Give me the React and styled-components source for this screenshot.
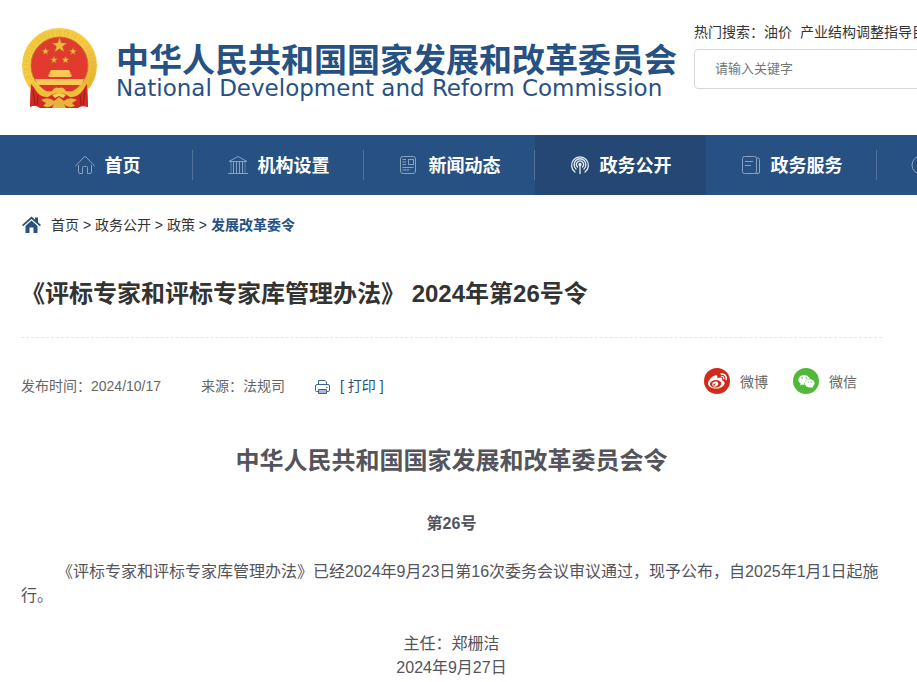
import React from 'react';
import styled, { createGlobalStyle } from 'styled-components';
import { FaWeibo, FaWeixin } from 'react-icons/fa';

const GlobalStyle = createGlobalStyle`
  * {
    box-sizing: border-box;
  }

  body {
    margin: 0;
    background: #fff;
    color: #333;
    font-family: "Liberation Sans", "Noto Sans CJK SC", sans-serif;
    font-size: 14px;
  }

  a {
    color: inherit;
    text-decoration: none;
  }
`;

const Page = styled.div`
  overflow: hidden;
`;

const HeaderWrapper = styled.header`
  display: flex;
  height: 135px;
  padding-left: 21px;
`;

const Logo = styled.a`
  display: flex;
  flex: none;
  gap: 19px;
  width: 673px;
  padding-top: 27px;

  svg {
    display: block;
  }
`;

const LogoText = styled.div`
  padding-top: 17px;
  color: #275183;
  white-space: nowrap;

  strong {
    display: block;
    font-size: 33px;
    line-height: 34px;
  }

  span {
    display: block;
    font-family: "DejaVu Sans", sans-serif;
    font-size: 23px;
    line-height: 20px;
  }
`;

const Search = styled.form`
  flex: 1 0 300px;
  padding-top: 22px;

  p {
    display: flex;
    gap: 8px;
    margin: 0 0 7px;
    line-height: 20px;
    white-space: nowrap;
  }

  input {
    display: block;
    width: 100%;
    height: 40px;
    padding: 0 20px 2px;
    border: 1px solid #d5d8da;
    border-radius: 4px;
    font-family: inherit;
    font-size: 13px;

    &::placeholder {
      color: #757575;
    }
  }
`;

const NavBar = styled.nav`
  display: flex;
  padding-left: 22px;
  background: #275183;
`;

const NavItem = styled.a`
  display: flex;
  flex: 0 0 171px;
  align-items: center;
  justify-content: ${({ $start }) => ($start ? 'flex-start' : 'center')};
  gap: 10px;
  height: 60px;
  padding-bottom: 2px;
  padding-left: ${({ $start }) => ($start ? '34px' : '0')};
  background: ${({ $active }) => ($active ? '#244873' : 'none')};
  color: #fff;
  font-size: 18px;
  font-weight: bold;

  svg {
    margin-top: 2px;
    color: ${({ $active }) => ($active ? '#e9edf1' : '#8ba2bf')};
  }
`;

const Divider = styled.span`
  flex: none;
  align-self: center;
  width: 1px;
  height: 30px;
  margin-left: -1px;
  background: #527499;
`;

const Main = styled.main`
  padding: 0 35px 3px 21px;
`;

const Breadcrumb = styled.div`
  display: flex;
  align-items: center;
  gap: 10px;
  height: 58px;

  svg {
    margin-top: 2px;
  }

  strong {
    color: #275183;
  }
`;

const Title = styled.h1`
  margin: 0;
  padding: 23px 0 25px;
  border-bottom: 1px dashed #e6e6e6;
  font-size: 24px;
  line-height: 36px;
`;

const MetaRow = styled.div`
  display: flex;
  align-items: flex-end;
  justify-content: space-between;
  padding-top: 28px;
  color: #666;
`;

const Info = styled.div`
  display: flex;
  gap: 40px;
  line-height: 20px;
`;

const Source = styled.div`
  display: flex;
  gap: 30px;
`;

const PrintButton = styled.button`
  display: flex;
  align-items: center;
  gap: 10px;
  padding: 0;
  border: none;
  background: none;
  color: #275183;
  font: inherit;
  cursor: pointer;
`;

const Share = styled.div`
  display: flex;
  height: 30px;
`;

const ShareLink = styled.a`
  display: flex;
  align-items: center;
  gap: 10px;
  padding-right: 25px;
`;

const ShareIcon = styled.span`
  display: flex;
  align-items: center;
  justify-content: center;
  width: 26px;
  height: 26px;
  border-radius: 50%;
  background: ${({ $color }) => $color};
  color: #fff;
`;

const Article = styled.article`
  padding-top: 53px;
  color: #54545c;
  font-size: 16px;
  line-height: 24px;

  h2 {
    margin: 0 0 39px;
    font-size: 24px;
    line-height: 24px;
    text-align: center;
  }

  h3 {
    margin: 0 0 24px;
    font-size: 16px;
    text-align: center;
  }

  p {
    margin: 0 0 24px;
    text-indent: 36px;
  }
`;

const Signature = styled.div`
  text-align: center;
`;

const star = (cx, cy, r) =>
  Array.from({ length: 10 }, (_, i) => {
    const a = (Math.PI / 5) * i - Math.PI / 2;
    const d = i % 2 ? r * 0.4 : r;
    return `${cx + d * Math.cos(a)},${cy + d * Math.sin(a)}`;
  }).join(' ');

const Emblem = () => (
  <svg width="76" height="82" viewBox="0 0 76 82" aria-hidden="true">
    <defs>
      <linearGradient id="gold" x1="0" y1="0" x2="1" y2="1">
        <stop offset="0" stopColor="#f0c93f" />
        <stop offset="0.5" stopColor="#f6cc45" />
        <stop offset="1" stopColor="#e3a92c" />
      </linearGradient>
    </defs>
    <path d="M10 57 L9 80 Q14 77 19 81 H57 Q62 77 67 80 L66 57 Z" fill="#cb2a22" />
    <circle cx="38.5" cy="38.5" r="37.5" fill="url(#gold)" />
    <circle cx="38.5" cy="38.5" r="33" fill="none" stroke="#dca631" strokeWidth="5" strokeDasharray="1 2 2 3" opacity="0.25" />
    <circle cx="38.5" cy="38.5" r="28.5" fill="#e23a2e" stroke="#bd7c25" />
    <g fill="#efbd3d" stroke="#a8701c" strokeWidth="0.4">
      <polygon points={star(38.5, 18.5, 8)} />
      <polygon points={star(24.5, 24.5, 4)} />
      <polygon points={star(52, 24.5, 4)} />
      <polygon points={star(33, 33, 4)} />
      <polygon points={star(44.5, 33, 4)} />
    </g>
    <g fill="#f8c957">
      <path d="M30 43 H48 L50 46.5 H28 Z" />
      <path d="M29 46 H49 V48 H29 Z" />
      <path d="M27 47.5 H51 L50 50 H28 Z" />
      <path d="M14 52 H63 L61 57 L58 59 H19 L16 57 Z" />
    </g>
    <path d="M18 58 H59 L51 64 H25 Z" fill="#de3428" />
    <path d="M10 57 Q22 72 31 63 Q34 60 38 62 Q42 60 45 63 Q54 72 66 57 L67 80 Q60 78 55 81 L50 76 L45 81 H31 L26 76 L20 81 Q14 77 9 80 Z" fill="#d12a23" />
    <path d="M11 55 Q21 67 31 64 Q34 59 38 61 Q42 59 45 64 Q55 67 66 55 Q60 71 49 70 L44 67 Q38 65 32 67 L27 70 Q16 71 11 55 Z" fill="#f0bf3d" />
    <path d="M20 73 Q28 69 33 74 L38 70 L43 74 Q48 69 56 73 L51 76 L54 79 Q47 82 43 77 L45 81 H31 L33 77 Q29 82 22 79 L25 76 Z" fill="#e8b33a" />
    <path d="M31 68 Q38 64 45 68 L42 71 L38 69 L34 71 Z" fill="#f2d056" />
    <path d="M12 63 L14 78 M17 68 L16 78 M64 63 L62 78 M59 68 L60 78" stroke="#991c1b" fill="none" />
  </svg>
);

const HomeIcon = () => (
  <svg width="20" height="20" viewBox="0 0 20 20" fill="none" stroke="currentColor" strokeLinejoin="round" aria-hidden="true">
    <path d="M.5 11 L9 2 Q10 1 11 2 L19.5 11" strokeLinecap="round" />
    <path d="M3.5 10 V17 Q3.5 18.5 5 18.5 H7.5 V12.5 Q7.5 11.5 8.5 11.5 H11.5 Q12.5 11.5 12.5 12.5 V18.5 H15 Q16.5 18.5 16.5 17 V10" />
  </svg>
);

const InstitutionIcon = () => (
  <svg width="20" height="20" viewBox="0 0 20 20" fill="none" stroke="currentColor" aria-hidden="true">
    <path d="M1 6.5 L10 1.5 L19 6.5 Z M5.5 7 V18 M8.5 7 V18 M11.5 7 V18 M14.5 7 V18" />
    <path d="M3 6.5 V18 M17 6.5 V18" opacity="0.6" />
    <path d="M0 18.5 H20" />
  </svg>
);

const NewsIcon = () => (
  <svg width="20" height="20" viewBox="0 0 20 20" fill="none" stroke="currentColor" aria-hidden="true">
    <rect x="1.5" y="1.5" width="15" height="17" rx="2.5" />
    <rect x="9.5" y="4.5" width="5" height="5" />
    <path d="M3.5 4.5 H7 M3.5 7 H7 M3.5 9.5 H7 M3.5 12.5 H14.5 M3.5 15 H10.5" />
  </svg>
);

const BroadcastIcon = () => (
  <svg width="20" height="20" viewBox="0 0 20 20" fill="none" stroke="currentColor" strokeWidth="1.3" strokeLinecap="round" aria-hidden="true">
    <path d="M5 17 A8.4 8.4 0 1 1 15 17" />
    <path d="M6 14 A5.9 5.9 0 1 1 14 14" />
    <path d="M7.5 12 A3.5 3.5 0 1 1 12.5 12" />
    <circle cx="10" cy="9.5" r="1" fill="currentColor" />
    <path d="M10 10 V18.5" />
  </svg>
);

const ServiceIcon = () => (
  <svg width="20" height="20" viewBox="0 0 20 20" fill="none" stroke="currentColor" aria-hidden="true">
    <rect x="1.5" y="1.5" width="14" height="17" rx="2" />
    <path d="M4 6.5 H12 M4 10.5 H10 M15.5 3 H17 Q18.5 3 18.5 4.5 V17 Q18.5 18.5 17 18.5 H14" />
  </svg>
);

const CircleIcon = () => (
  <svg width="20" height="20" viewBox="0 0 20 20" fill="none" stroke="currentColor" aria-hidden="true">
    <circle cx="10" cy="10" r="9" />
  </svg>
);

const SolidHomeIcon = () => (
  <svg width="20" height="18" viewBox="0 0 20 18" fill="#275183" aria-hidden="true">
    <path d="M1 9 L10.5 0.5 L14 3.6 V1.5 H17 V6.3 L20 9 L18.8 10.3 L10.5 3 L2.2 10.3 Z" />
    <path d="M4.5 10 L10.5 4.6 L16.5 10 V17 H12.5 V11.5 H8.5 V17 H4.5 Z" />
  </svg>
);

const PrinterIcon = () => (
  <svg width="15" height="15" viewBox="0 0 15 15" fill="none" stroke="#3d6290" aria-hidden="true">
    <path d="M3.5 6 V1.5 H10 L11.5 3 V6" />
    <path d="M3 12.5 H1.5 Q.5 12.5 .5 11.5 V7 Q.5 5.5 2 5.5 H13 Q14.5 5.5 14.5 7 V11.5 Q14.5 12.5 13.5 12.5 H12" />
    <path d="M3.5 10.5 H11.5 V14.5 H3.5 Z" fill="#a8bdd5" />
    <path d="M11 8.5 H12.5" />
  </svg>
);

const Header = () => (
  <HeaderWrapper>
    <Logo href="/">
      <Emblem />
      <LogoText>
        <strong>中华人民共和国国家发展和改革委员会</strong>
        <span>National Development and Reform Commission</span>
      </LogoText>
    </Logo>
    <Search>
      <p>
        <label htmlFor="keyword">热门搜索：<a href="/">油价</a></label>
        <a href="/">产业结构调整指导目</a>
      </p>
      <input id="keyword" type="text" placeholder="请输入关键字" />
    </Search>
  </HeaderWrapper>
);

const Nav = () => (
  <NavBar>
    <NavItem href="/"><HomeIcon />首页</NavItem>
    <Divider />
    <NavItem href="/"><InstitutionIcon />机构设置</NavItem>
    <Divider />
    <NavItem href="/"><NewsIcon />新闻动态</NavItem>
    <Divider />
    <NavItem href="/" $active><BroadcastIcon />政务公开</NavItem>
    <NavItem href="/"><ServiceIcon />政务服务</NavItem>
    <Divider />
    <NavItem href="/" $start><CircleIcon /></NavItem>
  </NavBar>
);

const App = () => {
  return (
    <Page>
      <GlobalStyle />
      <Header />
      <Nav />
      <Main>
        <Breadcrumb>
          <SolidHomeIcon />
          <div>
            <a href="/">首页</a> &gt; <a href="/">政务公开</a> &gt; <a href="/">政策</a> &gt; <strong>发展改革委令</strong>
          </div>
        </Breadcrumb>
        <Title>《评标专家和评标专家库管理办法》 2024年第26号令</Title>

        {/* Publish date, source, print and share links */}
        <MetaRow>
          <Info>
            <span>发布时间：2024/10/17</span>
            <Source>
              <span>来源：法规司</span>
              <PrintButton type="button"><PrinterIcon />[ 打印 ]</PrintButton>
            </Source>
          </Info>
          <Share>
            <ShareLink href="/">
              <ShareIcon $color="#d02a1a"><FaWeibo size={19} /></ShareIcon>
              微博
            </ShareLink>
            <ShareLink href="/">
              <ShareIcon $color="#52b838"><FaWeixin size={17} /></ShareIcon>
              微信
            </ShareLink>
          </Share>
        </MetaRow>

        <Article>
          <h2>中华人民共和国国家发展和改革委员会令</h2>
          <h3>第26号</h3>
          <p>《评标专家和评标专家库管理办法》已经2024年9月23日第16次委务会议审议通过，现予公布，自2025年1月1日起施行。</p>
          <Signature>主任：郑栅洁</Signature>
          <Signature>2024年9月27日</Signature>
        </Article>
      </Main>
    </Page>
  );
};

export default App;
